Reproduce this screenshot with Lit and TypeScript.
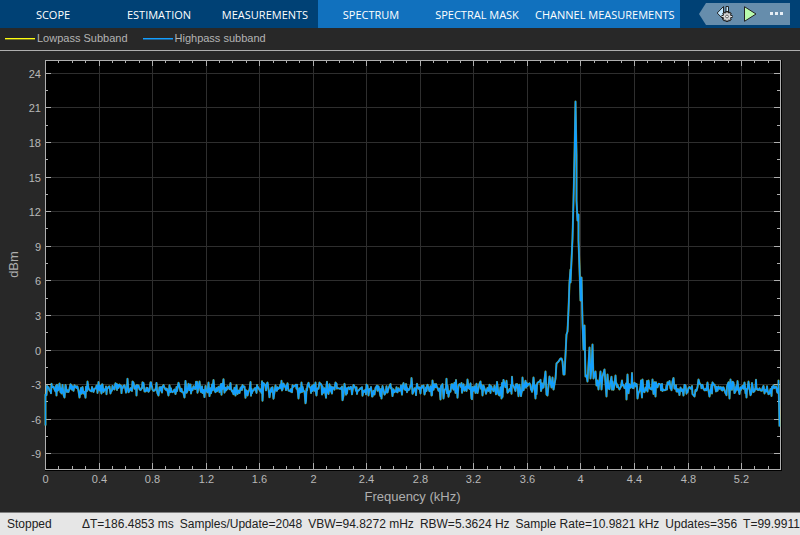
import { LitElement, html, svg, css } from "lit";
import { customElement, property, state } from "lit/decorators.js";
import { classMap } from "lit/directives/class-map.js";

interface Tab {
  label: string;
  contextual: boolean;
}

const TABS: Tab[] = [
  { label: "SCOPE", contextual: false },
  { label: "ESTIMATION", contextual: false },
  { label: "MEASUREMENTS", contextual: false },
  { label: "SPECTRUM", contextual: true },
  { label: "SPECTRAL MASK", contextual: true },
  { label: "CHANNEL MEASUREMENTS", contextual: true },
];

const READOUTS = [
  "ΔT=186.4853 ms",
  "Samples/Update=2048",
  "VBW=94.8272 mHz",
  "RBW=5.3624 Hz",
  "Sample Rate=10.9821 kHz",
  "Updates=356",
  "T=99.9911",
];

const X_MAX = 5.4907;
const Y_MAX = 25.11;
const Y_MIN = -10.353;

/* The trace is stored on a 735 x 409 lattice covering the axes. */
const GRID_W = 735;
const GRID_H = 409;

/* Carrier and its skirts. */
const PEAK: [number, number][] = [
  [498, 327], [500, 311], [501, 334], [502, 335], [504, 316], [506, 327], [507, 317],
  [508, 329], [510, 318], [511, 303], [513, 301], [515, 298], [516, 298], [517, 301],
  [518, 314], [519, 314], [521, 274], [522, 271], [523, 250], [524, 222], [525, 209],
  [525, 222], [527, 178], [528, 140], [529, 95], [530, 41], [531, 95], [531, 140],
  [532, 160], [533, 154], [533, 180], [534, 208], [535, 240], [536, 217], [537, 262],
  [538, 289], [539, 265], [540, 316], [541, 315], [542, 321], [544, 287], [545, 318],
  [546, 308], [547, 284], [548, 318], [550, 311], [551, 325], [552, 320], [553, 329],
  [555, 311], [556, 329], [557, 316], [559, 309], [561, 336], [562, 314],
];

/* Single-bin excursions in the noise floor. */
const SPIKES = new Map<number, number>([
  [11, 335], [14, 323], [34, 337], [38, 333], [42, 321], [56, 333], [72, 324], [87, 321],
  [91, 335], [105, 322], [113, 335], [123, 335], [139, 337], [154, 321], [163, 322],
  [190, 335], [222, 322], [238, 323], [253, 338], [256, 322], [270, 322], [274, 322],
  [290, 322], [298, 335], [323, 335], [327, 336], [336, 338], [386, 335], [395, 339],
  [398, 338], [422, 319], [435, 321], [453, 334], [456, 338], [477, 317], [488, 317],
  [490, 338], [567, 321], [570, 315], [575, 327], [581, 339], [582, 314], [592, 338],
  [597, 319], [603, 320], [607, 319], [610, 336], [627, 321], [638, 335], [649, 336],
  [662, 322], [664, 336], [684, 338], [685, 319], [699, 322], [701, 337], [724, 333],
]);

function noiseSource(seed: number) {
  let s = seed;
  return () => {
    s = (s * 1664525 + 1013904223) >>> 0;
    return s / 4294967296;
  };
}

function buildTrace(): [number, number][] {
  const rnd = noiseSource(20481);
  const floor = (from: number, to: number) => {
    const out: [number, number][] = [];
    for (let x = from; x < to; x++) {
      const near = Math.max(0, 1 - Math.abs(x - 530) / 110);
      const mean = 328.5 - near * 5;
      const burst = rnd() < 0.35 ? 10 : 5;
      const level = () => mean + (rnd() + rnd() + rnd() - 1.5) * (burst + near * 3);
      out.push([x, SPIKES.get(x) ?? level()]);
      if (x % 5 < 2) out.push([x + 0.5, level()]);
    }
    return out;
  };
  return [[0, 365], [0, 334], ...floor(1, 498), ...PEAK, ...floor(563, 734), [733, 320], [734, 366]];
}

const TRACE = buildTrace();

@customElement("spectrum-plot")
export class SpectrumPlot extends LitElement {
  static styles = css`
    :host {
      display: block;
      min-height: 240px;
      overflow: hidden;
      contain: size;
    }
    svg {
      display: block;
      width: 100%;
      height: 100%;
    }
    .axes {
      fill: #000;
    }
    .grid {
      stroke: #2e2e2e;
    }
    .frame {
      stroke: #afafaf;
      fill: none;
    }
    .tick {
      fill: #b8b8b8;
      font: 11px "Liberation Sans", Arial, sans-serif;
    }
    .name {
      fill: #afafaf;
      font: 13px "Liberation Sans", Arial, sans-serif;
      text-anchor: middle;
    }
    .middle {
      text-anchor: middle;
    }
    .end {
      text-anchor: end;
    }
    .trace {
      fill: none;
      stroke-linejoin: round;
    }
    .low {
      stroke: #ffff11;
      stroke-width: 2;
      opacity: 0.55;
    }
    .high {
      stroke: #139fff;
      stroke-width: 1.6;
    }
  `;

  @state() private w = 800;
  @state() private h = 461;

  private observer = new ResizeObserver(() => this.measure());

  connectedCallback() {
    super.connectedCallback();
    this.observer.observe(this);
  }

  disconnectedCallback() {
    this.observer.disconnect();
    super.disconnectedCallback();
  }

  private measure() {
    this.w = this.clientWidth || this.w;
    this.h = this.clientHeight || this.h;
  }

  render() {
    const left = 45;
    const top = 9;
    const right = this.w - 20;
    const bottom = this.h - 43;
    const pw = right - left;
    const ph = bottom - top;
    const px = (v: number) => Math.round(left + (v / X_MAX) * pw) + 0.5;
    const py = (v: number) => Math.round(top + ((Y_MAX - v) / (Y_MAX - Y_MIN)) * ph) + 0.5;

    const xs = Array.from({ length: 54 }, (_, i) => i + 1);
    const ys = Array.from({ length: 23 }, (_, i) => -9 + i * 1.5);
    const xMajor = Array.from({ length: 14 }, (_, i) => i * 4);
    const yMajor = ys.filter((v) => v % 3 === 0);

    const grid =
      xMajor.slice(1).map((i) => `M${px(i / 10)} ${top}V${bottom}`).join("") +
      yMajor.map((v) => `M${left} ${py(v)}H${right}`).join("");

    const ticks =
      xs.map((i) => {
        const n = i % 4 === 0 ? 6 : 3;
        const x = px(i / 10);
        return `M${x} ${top}v${n}M${x} ${bottom}v${-n}`;
      }).join("") +
      ys.map((v) => {
        const n = v % 3 === 0 ? 6 : 3;
        return `M${left} ${py(v)}h${n}M${right} ${py(v)}h${-n}`;
      }).join("");

    const line = TRACE.map(
      ([x, y], i) =>
        `${i ? "L" : "M"}${(left + 0.5 + (x / GRID_W) * pw).toFixed(1)} ${(top + 0.5 + (y / GRID_H) * ph).toFixed(1)}`,
    ).join("");

    return html`
      <svg viewBox="0 0 ${this.w} ${this.h}" role="img" aria-label="Power spectrum">
        <rect class="axes" x=${left} y=${top} width=${pw + 2} height=${ph + 2}></rect>
        <path class="grid" d=${grid}></path>
        <path class="frame" d=${ticks}></path>
        <rect class="frame" x=${left + 0.5} y=${top + 0.5} width=${pw} height=${ph}></rect>
        <path class="trace low" d=${line}></path>
        <path class="trace high" d=${line}></path>
        ${xMajor.map((i) => svg`<text class="tick middle" x=${px(i / 10)} y=${bottom + 14}>${i / 10}</text>`)}
        ${yMajor.map((v) => svg`<text class="tick end" x=${left - 4} y=${py(v) + 4}>${v}</text>`)}
        <text class="name" x=${left + pw / 2} y=${bottom + 32}>Frequency (kHz)</text>
        <text class="name" transform="translate(18 ${top + ph / 2}) rotate(-90)">dBm</text>
      </svg>
    `;
  }
}

@customElement("scope-legend")
export class ScopeLegend extends LitElement {
  static styles = css`
    :host {
      display: flex;
      gap: 15px;
      padding: 0 5px;
      height: 22px;
      align-items: center;
      border-bottom: 1px solid #afafaf;
      font: 11px/20px "Liberation Sans", Arial, sans-serif;
      color: #b4b4b4;
    }
    .entry {
      display: flex;
      align-items: center;
      gap: 2px;
      height: 22px;
      padding-bottom: 2px;
      white-space: nowrap;
    }
    .swatch {
      width: 30px;
      height: 1px;
      margin-top: 2px;
      border-bottom: 1px solid;
    }
    .low {
      background: #ffff11;
      border-color: #77771f;
    }
    .high {
      background: #139fff;
      border-color: #1f5f8f;
    }
  `;

  render() {
    return html`
      <span class="entry"><span class="swatch low"></span>Lowpass Subband</span>
      <span class="entry"><span class="swatch high"></span>Highpass subband</span>
    `;
  }
}

@customElement("scope-tabs")
export class ScopeTabs extends LitElement {
  static styles = css`
    :host {
      display: flex;
      height: 28px;
      background: #004175;
    }
    .tabs {
      display: flex;
    }
    button {
      border: 0;
      margin: 0;
      padding: 0;
      background: none;
      color: #fff;
      font: 11px/28px "Open Sans", "Noto Sans", sans-serif;
      white-space: nowrap;
    }
    .tab {
      min-width: 106px;
      padding: 0 5px;
      height: 28px;
      line-height: 30px;
    }
    .contextual {
      background: #1171be;
    }
    .quick {
      display: flex;
      align-items: center;
      gap: 4px;
      margin: 3px 10px 3px auto;
      padding: 0 4px 0 14px;
      background: #668dac;
      clip-path: polygon(0 50%, 7px 0, 100% 0, 100% 100%, 7px 100%);
    }
    .quick button {
      height: 22px;
    }
    .quick svg {
      display: block;
    }
  `;

  @property({ attribute: false }) tabs: Tab[] = [];

  render() {
    const teeth = Array.from({ length: 8 }, (_, i) => i * 45);
    return html`
      <nav class="tabs">
        ${this.tabs.map(
          (t) => html`<button class=${classMap({ tab: true, contextual: t.contextual })}>${t.label}</button>`,
        )}
      </nav>
      <div class="quick">
        <button aria-label="Step back options">
          <svg width="22" height="22" viewBox="0 0 22 22">
            <path d="M10.500 3.500L4.200 10L10.500 16.500Z" fill="#c4e8ff" stroke="#222"></path>
            <path d="M13 3.500h2.500v7h-2.500z" fill="#c4e8ff" stroke="#222"></path>
            <g transform="translate(14 13.500)">
              ${teeth.map((a) => svg`<rect x="-1" y="-5" width="2" height="3" fill="#ddd" stroke="#222" transform="rotate(${a})"></rect>`)}
              <circle r="3.600" fill="#d8d8d8"></circle>
              <circle r="1.400" fill="#fff" stroke="#444" stroke-width="0.800"></circle>
            </g>
          </svg>
        </button>
        <button aria-label="Run">
          <svg width="22" height="22" viewBox="0 0 22 22">
            <path d="M5.500 3.700L17 11L5.500 18.300Z" fill="#b9fbad" stroke="#222"></path>
          </svg>
        </button>
        <button aria-label="More">
          <svg width="21" height="22" viewBox="0 0 21 22">
            <path d="M5 9h3v3h-3zM10 9h3v3h-3zM15 9h3v3h-3z" fill="#e6eef5"></path>
          </svg>
        </button>
      </div>
    `;
  }
}

@customElement("scope-status")
export class ScopeStatus extends LitElement {
  static styles = css`
    :host {
      display: flex;
      gap: 6px;
      height: 22px;
      padding-left: 7px;
      overflow: hidden;
      border-top: 1px solid #808080;
      background: #e6e6e6;
      color: #212121;
      font: 12px/22px "Liberation Sans", Arial, sans-serif;
      white-space: nowrap;
    }
    .state {
      min-width: 69px;
    }
  `;

  @property({ attribute: false }) readouts: string[] = [];

  render() {
    return html`
      <span class="state">Stopped</span>
      ${this.readouts.map((r) => html`<span>${r}</span>`)}
    `;
  }
}

@customElement("app-root")
export class AppRoot extends LitElement {
  static styles = css`
    :host {
      display: flex;
      flex-direction: column;
      min-height: 100vh;
      background: #282828;
      overflow: hidden;
    }
    .plot {
      flex: 1;
    }
  `;

  render() {
    return html`
      <scope-tabs .tabs=${TABS}></scope-tabs>
      <scope-legend></scope-legend>
      <spectrum-plot class="plot"></spectrum-plot>
      <scope-status .readouts=${READOUTS}></scope-status>
    `;
  }
}
